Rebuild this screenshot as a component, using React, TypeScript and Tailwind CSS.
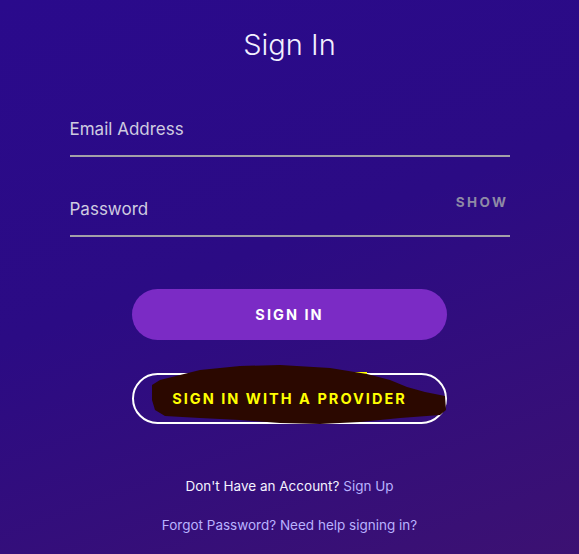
import React from "react";

export default function App() {
  return (
    <div
      className="w-[579px] h-[554px] overflow-hidden bg-[linear-gradient(160deg,#2a0a8c_0%,#2b0b84_45%,#3c1172_100%)] text-white flex flex-col items-center"
      style={{ fontFamily: "Inter, 'Open Sans', sans-serif" }}
    >
      <h1 className="mt-[27px] text-[29px] leading-[36px] font-light text-[#f2f0ff]">Sign In</h1>

      <div className="mt-[54px] w-[440px] flex flex-col">
        <div className="h-[40px] border-b-2 border-[#a3a0a8] flex items-start">
          <span className="text-[17px] leading-[24px] text-[#cfcbe0] font-normal">Email Address</span>
        </div>
        <div className="mt-[35px] h-[45px] border-b-2 border-[#a3a0a8] flex items-start justify-between">
          <span className="mt-[5px] text-[17px] leading-[24px] text-[#cfcbe0]">Password</span>
          <span className="mt-[1px] text-[13.5px] leading-[18px] font-bold tracking-[0.18em] text-[#8f8aa6] mr-[1px]">SHOW</span>
        </div>
      </div>

      <button className="mt-[52px] w-[315px] h-[51px] rounded-full bg-[#7b2bc5] text-[14.5px] font-bold tracking-[0.14em] text-white">
        SIGN IN
      </button>

      <div className="relative mt-[33px] w-[315px] h-[51px]">
        <div className="absolute inset-0 rounded-full border-2 border-white" />
        <svg className="absolute left-0 top-0 overflow-visible" width="315" height="51" viewBox="0 0 315 51">
          <rect x="70" y="-1" width="165" height="10" fill="#ffff00" />
          <polygon
            fill="#2b0800"
            points="20,12 28,7 68,-3 108,-7 148,-8 198,-5 235,1 258,7 275,14 293,19 313,23 314,37 308,42 268,45 228,49 188,51 148,50 108,47 68,45 33,43 23,37 20,27"
          />
        </svg>
        <div className="absolute inset-0 flex items-center justify-center">
          <span className="text-[14.5px] font-bold tracking-[0.14em] text-[#ffff00]">SIGN IN WITH A PROVIDER</span>
        </div>
      </div>

      <p className="mt-[52px] text-[13.5px] leading-[20px] text-[#f4f2ff]">
        Don't Have an Account? <span className="text-[#b9b2ff]">Sign Up</span>
      </p>
      <p className="mt-[19px] text-[13.5px] leading-[20px] text-[#b9b2ff]">Forgot Password? Need help signing in?</p>
    </div>
  );
}
